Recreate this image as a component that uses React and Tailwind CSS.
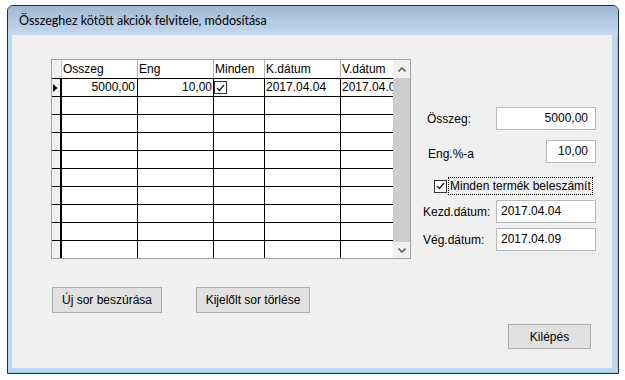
import React from "react";

const ARIAL = { fontFamily: '"Liberation Sans", Arial, sans-serif' };

function Check({ size = 13 }) {
  return (
    <div
      className="flex items-center justify-center bg-white border border-[#333333] shrink-0"
      style={{ width: size, height: size }}
    >
      <svg width="9" height="8" viewBox="0 0 9 8">
        <polyline points="1,4 3.5,6.5 8,1" fill="none" stroke="#1a1a1a" strokeWidth="1.2" />
      </svg>
    </div>
  );
}

function Grid() {
  const rows = Array.from({ length: 10 });
  return (
    <div className="w-[360px] h-[200px] border border-[#a0a0a0] flex bg-white shrink-0">
      <div className="w-[341px] h-[198px] flex flex-col overflow-hidden">
        {/* header */}
        <div className="flex h-[18px] shrink-0 leading-[18px] text-[12px] text-black">
          <div className="w-[10px] h-full bg-[#f0f0f0] border-r border-[#c8c8c8]" />
          <div className="w-[76px] h-full border-r border-[#b4b4b4] pl-[1px]">Osszeg</div>
          <div className="w-[76px] h-full border-r border-[#b4b4b4] pl-[1px]">Eng</div>
          <div className="w-[51px] h-full border-r border-[#b4b4b4] pl-[1px]">Minden</div>
          <div className="w-[76px] h-full border-r border-[#b4b4b4] pl-[1px]">K.dátum</div>
          <div className="w-[52px] h-full pl-[1px]">V.dátum</div>
        </div>
        {rows.map((_, i) => (
          <div key={i} className="flex h-[18px] shrink-0 border-t border-black text-[12px] leading-[17px] text-black">
            <div className="w-[10px] h-full bg-[#f0f0f0] border-r-2 border-black flex items-center pl-[1px]">
              {i === 0 && (
                <svg width="5" height="8" viewBox="0 0 5 8">
                  <polygon points="0,0 4.5,4 0,8" fill="#000" />
                </svg>
              )}
            </div>
            <div className="w-[76px] h-full border-r border-black text-right pr-[2px]">{i === 0 ? "5000,00" : ""}</div>
            <div className="w-[76px] h-full border-r border-black text-right pr-[1px]">{i === 0 ? "10,00" : ""}</div>
            <div className="w-[51px] h-full border-r border-black flex items-start pt-[2px]">
              {i === 0 && <Check size={13} />}
            </div>
            <div className="w-[76px] h-full border-r border-black pl-[1px] whitespace-nowrap">{i === 0 ? "2017.04.04" : ""}</div>
            <div className="w-[52px] h-full pl-[1px] whitespace-nowrap overflow-hidden">{i === 0 ? "2017.04.09" : ""}</div>
          </div>
        ))}
      </div>
      {/* scrollbar */}
      <div className="w-[17px] h-[198px] flex flex-col bg-[#f0f0f0]">
        <div className="h-[18px] flex items-center justify-center">
          <svg width="8" height="5" viewBox="0 0 8 5">
            <polyline points="0.5,4.5 4,1 7.5,4.5" fill="none" stroke="#606060" strokeWidth="1.6" />
          </svg>
        </div>
        <div className="h-[164px] bg-[#cdcdcd]" />
        <div className="h-[16px] flex items-center justify-center">
          <svg width="8" height="5" viewBox="0 0 8 5">
            <polyline points="0.5,0.5 4,4 7.5,0.5" fill="none" stroke="#606060" strokeWidth="1.6" />
          </svg>
        </div>
      </div>
    </div>
  );
}

function Input({ w, value, right }) {
  return (
    <div
      className={`${w} h-[23px] bg-white border border-[#b9b9b9] text-[12px] leading-[21px] text-black whitespace-nowrap ${
        right ? "text-right pr-[7px]" : "pl-[4px]"
      }`}
    >
      {value}
    </div>
  );
}

function Button({ w, h, children }) {
  return (
    <div
      className={`${w} ${h} bg-[#e1e1e1] border border-[#adadad] flex items-center justify-center text-[12px] text-black whitespace-nowrap`}
    >
      {children}
    </div>
  );
}

export default function App() {
  return (
    <div className="w-[625px] h-[380px] bg-white overflow-hidden" style={ARIAL}>
      <div className="ml-[7px] mt-[5px] w-[612px] h-[369px] border border-[#2a2a2a] rounded-t-[6px] flex flex-col overflow-hidden bg-[#bed4eb]">
        {/* title bar */}
        <div
          className="h-[29px] shrink-0 bg-gradient-to-b from-[#9fb8d3] to-[#c4d9ee] flex items-center pl-[11px] text-[12.5px] text-black pt-[1px]"
          style={{ fontFamily: 'Lato, "Noto Sans", sans-serif' }}
        >
          Összeghez kötött akciók felvitele, módosítása
        </div>
        {/* client row */}
        <div className="flex h-[333px] shrink-0">
          <div className="w-[4px] bg-[#bfd5ec]" />
          <div className="w-[600px] h-[333px] bg-[#f0f0f0] flex flex-col">
            <div className="flex">
              <div className="ml-[39px] mt-[24px]">
                <Grid />
              </div>
              <div className="ml-[11px] w-[174px] flex flex-col text-[12px] text-black">
                <div className="mt-[72px] h-[23px] flex items-center justify-between">
                  <span className="ml-[5px]">Összeg:</span>
                  <Input w="w-[100px]" value="5000,00" right />
                </div>
                <div className="mt-[10px] h-[23px] flex items-center justify-between">
                  <span className="ml-[6px] mt-[4px]">Eng.%-a</span>
                  <Input w="w-[50px]" value="10,00" right />
                </div>
                <div className="mt-[14px] h-[18px] flex items-center">
                  <div className="ml-[12px]">
                    <Check size={13} />
                  </div>
                  <div className="ml-[1px] h-[18px] border border-dotted border-black pl-[1px] pr-[1px] leading-[16px] whitespace-nowrap">
                    Minden termék beleszámít
                  </div>
                </div>
                <div className="mt-[5px] h-[23px] flex items-center justify-between">
                  <span className="ml-[1px]">Kezd.dátum:</span>
                  <Input w="w-[100px]" value="2017.04.04" />
                </div>
                <div className="mt-[5px] h-[23px] flex items-center justify-between">
                  <span className="ml-[1px]">Vég.dátum:</span>
                  <Input w="w-[100px]" value="2017.04.09" />
                </div>
              </div>
            </div>
            <div className="flex mt-[28px] ml-[40px] gap-[34px]">
              <Button w="w-[110px]" h="h-[26px]">Új sor beszúrása</Button>
              <Button w="w-[114px]" h="h-[26px]">Kijelőlt sor törlése</Button>
            </div>
            <div className="flex mt-[11px] ml-[496px]">
              <Button w="w-[83px]" h="h-[25px]">Kilépés</Button>
            </div>
          </div>
          <div className="w-[6px] bg-[#bfd5ec] border-r border-[#8fd0ee]" />
        </div>
        <div className="h-[5px] shrink-0 bg-[#bfd5ec] border-b border-[#8fd0ee]" />
      </div>
    </div>
  );
}
